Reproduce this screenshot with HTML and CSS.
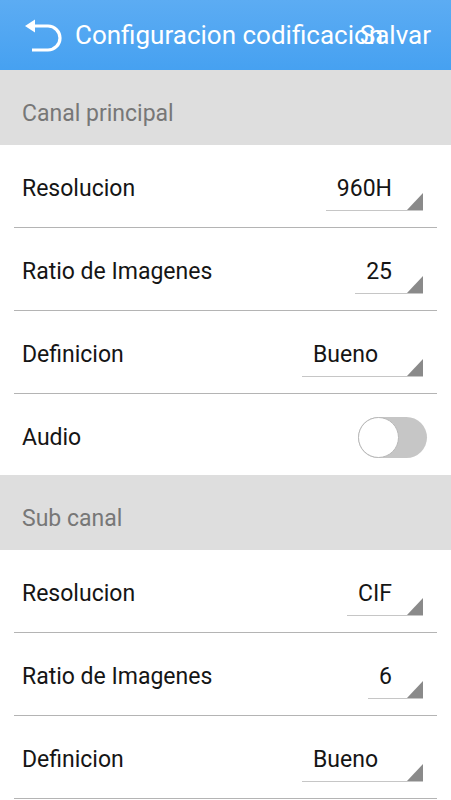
FILE: index.html
```html
<!DOCTYPE html>
<html lang="es">
<head>
    <meta charset="UTF-8">
    <meta name="viewport" content="width=device-width, initial-scale=1.0">
    <title>Configuracion codificacion</title>
    <link rel="stylesheet" href="styles.css">
</head>
<body>
    <header class="toolbar">
        <svg class="back-icon" width="40" height="40" viewBox="0 0 40 40">
            <path d="M3 10 L13 3.5 L13 16.5 Z" fill="#fff"/>
            <path d="M11 10 H26 A12 12 0 0 1 26 34 H10" fill="none" stroke="#fff" stroke-width="3.2"/>
        </svg>
        <div class="toolbar-title">Configuracion codificacion</div>
        <div class="toolbar-action">Salvar</div>
    </header>

    <div class="section-title">Canal principal</div>
    <div class="row">
        <span class="label">Resolucion</span>
        <span class="spinner">960H</span>
    </div>
    <div class="row">
        <span class="label">Ratio de Imagenes</span>
        <span class="spinner">25</span>
    </div>
    <div class="row">
        <span class="label">Definicion</span>
        <span class="spinner spinner-wide">Bueno</span>
    </div>
    <div class="row row-plain">
        <span class="label">Audio</span>
        <span class="switch"><span class="switch-thumb"></span></span>
    </div>

    <div class="section-title">Sub canal</div>
    <div class="row">
        <span class="label">Resolucion</span>
        <span class="spinner">CIF</span>
    </div>
    <div class="row">
        <span class="label">Ratio de Imagenes</span>
        <span class="spinner">6</span>
    </div>
    <div class="row">
        <span class="label">Definicion</span>
        <span class="spinner spinner-wide">Bueno</span>
    </div>
</body>
</html>
```

FILE: styles.css
```css
body {
    margin: 0;
    font-family: Roboto, 'Noto Sans', Arial, sans-serif;
    background: #fff;
    overflow: hidden;
}
.toolbar {
    height: 70px;
    display: flex;
    align-items: center;
    padding: 0 20px 0 22px;
    background: linear-gradient(#5cacf3, #46a1f1);
    color: #fff;
}
.back-icon {
    flex: none;
    margin-right: 13px;
    margin-top: 2px;
}
.toolbar-title {
    flex: 1 1 0;
    min-width: 0;
    white-space: nowrap;
    font-size: 26px;
}
.toolbar-action {
    flex: none;
    font-size: 26px;
}
.section-title {
    box-sizing: border-box;
    height: 75px;
    display: flex;
    align-items: center;
    padding: 11px 0 0 22px;
    background: #dedede;
    color: #777;
    font-size: 23px;
}
.row {
    box-sizing: border-box;
    height: 83px;
    margin: 0 14px;
    padding: 4px 14px 0 8px;
    display: flex;
    align-items: center;
    justify-content: space-between;
    border-bottom: 1px solid #b4b4b4;
    color: #151515;
    font-size: 23px;
}
.row-plain {
    border-bottom: none;
    height: 81px;
    padding: 5px 10px 0 8px;
}
.spinner {
    position: relative;
    height: 43px;
    display: flex;
    align-items: center;
    padding: 1px 31px 0 11px;
    border-bottom: 1px solid #c6c6c6;
}
.spinner-wide {
    padding-right: 45px;
}
.spinner::after {
    content: "";
    position: absolute;
    right: 0;
    bottom: 0;
    width: 0;
    height: 0;
    border-left: 16px solid transparent;
    border-bottom: 17px solid #8a8a8a;
}
.switch {
    position: relative;
    width: 69px;
    height: 41px;
    border-radius: 21px;
    background: #c6c6c6;
}
.switch-thumb {
    position: absolute;
    left: 0;
    top: 0;
    width: 39px;
    height: 39px;
    border-radius: 50%;
    background: #fff;
    border: 1px solid #b8b8b8;
}
```
